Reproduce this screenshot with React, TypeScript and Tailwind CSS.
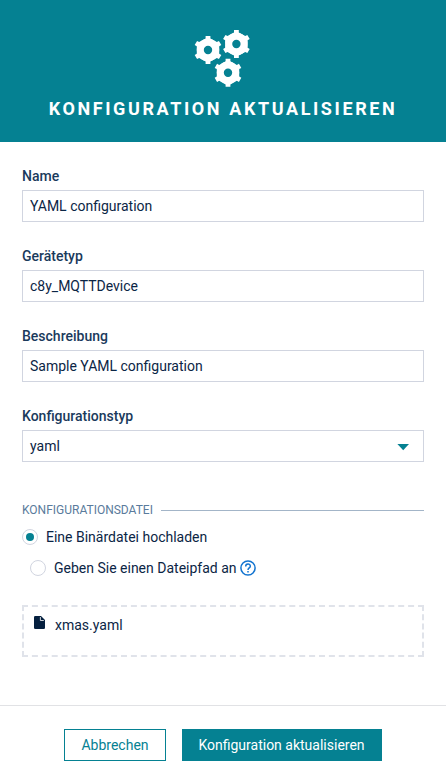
import React from "react";

const TEETH = [0, 60, 120, 180, 240, 300];

function Gear({ cx, cy }: { cx: number; cy: number }) {
  return (
    <g transform={`translate(${cx} ${cy})`}>
      <circle r="7.7" fill="none" stroke="currentColor" strokeWidth="7" />
      {TEETH.map((a) => (
        <path key={a} d="M-6 -9.4 L-2.4 -11.6 V-14 H2.4 V-11.6 L6 -9.4 Z" fill="currentColor" transform={`rotate(${a})`} />
      ))}
    </g>
  );
}

function Field({ label, value, select }: { label: string; value: string; select?: boolean }) {
  return (
    <div className="mb-6">
      <div className="mb-1 h-5 text-sm leading-5 font-medium text-[#1a3a5c]">{label}</div>
      <div className="flex h-8 items-center justify-between border border-[#d1d5e0] pr-3.5 pl-[7px] text-sm text-[#0b2545]">
        <span>{value}</span>
        {select && (
          <svg width="12" height="7" viewBox="0 0 12 7" className="mt-0.5 text-[#058192]">
            <path d="M0.4 0H12L6.2 6.2Z" fill="currentColor" />
          </svg>
        )}
      </div>
    </div>
  );
}

export default function App() {
  return (
    <div className="flex h-[781px] w-[446px] flex-col bg-white font-[Roboto,sans-serif] text-[#0b2545]">
      <header className="flex h-[142px] flex-col items-center bg-[#058192] pt-[30px] text-white">
        <svg width="58" height="58" viewBox="194 30 58 58">
          <Gear cx={208} cy={50} />
          <Gear cx={236.4} cy={44} />
          <Gear cx={228} cy={72.8} />
        </svg>
        <h1 className="mt-[9px] text-lg leading-6 font-bold tracking-[2.6px] whitespace-nowrap">KONFIGURATION AKTUALISIEREN</h1>
      </header>

      <main className="flex h-[563px] flex-col px-[22px] pt-6">
        <Field label="Name" value="YAML configuration" />
        <Field label="Gerätetyp" value="c8y_MQTTDevice" />
        <Field label="Beschreibung" value="Sample YAML configuration" />
        <Field label="Konfigurationstyp" value="yaml" select />

        <div className="mt-4 flex h-4 items-center gap-2 text-xs leading-4 text-[#5a7b9c]">
          <span>KONFIGURATIONSDATEI</span>
          <span className="h-px flex-1 bg-[#a3b5c8]" />
        </div>

        <div className="mt-[9px] flex h-5 items-center gap-2 text-sm">
          <span className="flex size-4 items-center justify-center rounded-full border border-[#d1d5e0]">
            <span className="size-2 rounded-full bg-[#058192]" />
          </span>
          <span>Eine Binärdatei hochladen</span>
        </div>
        <div className="mt-[11px] ml-2 flex h-5 items-center text-sm">
          <span className="mr-2 size-4 rounded-full border border-[#d1d5e0]" />
          <span>Geben Sie einen Dateipfad an</span>
          <svg width="16" height="16" viewBox="0 0 16 16" className="ml-[3px] text-[#1274d0]" fill="none" stroke="currentColor" strokeWidth="1.5">
            <circle cx="8" cy="8" r="7.1" />
            <path d="M5.7 6.4C5.7 3.2 10.3 3.2 10.3 6.2C10.3 7.9 8 8 8 9.9" />
            <path d="M8 10.9V12.5" />
          </svg>
        </div>

        <div className="mt-[27px] flex h-[52px] items-start border-2 border-dashed border-[#e0e3ea] pt-2 pl-2.5 text-sm leading-5">
          <svg width="11" height="13" viewBox="0 0 11 13" className="mt-px mr-2.5">
            <path d="M1.3 0H7L11 4V11.7Q11 13 9.7 13H1.3Q0 13 0 11.7V1.3Q0 0 1.3 0Z" fill="#05203f" />
            <path d="M6.4 1V4.5H9.8" fill="none" stroke="#fff" strokeWidth="0.8" />
          </svg>
          <span>xmas.yaml</span>
        </div>
      </main>

      <footer className="flex flex-1 items-start justify-center gap-4 border-t border-[#e1e2e5] pt-[23px] text-sm">
        <button className="h-8 w-[102px] border border-[#058192] text-[#058192]">Abbrechen</button>
        <button className="h-8 w-[200px] bg-[#058192] pr-px text-white">Konfiguration aktualisieren</button>
      </footer>
    </div>
  );
}
